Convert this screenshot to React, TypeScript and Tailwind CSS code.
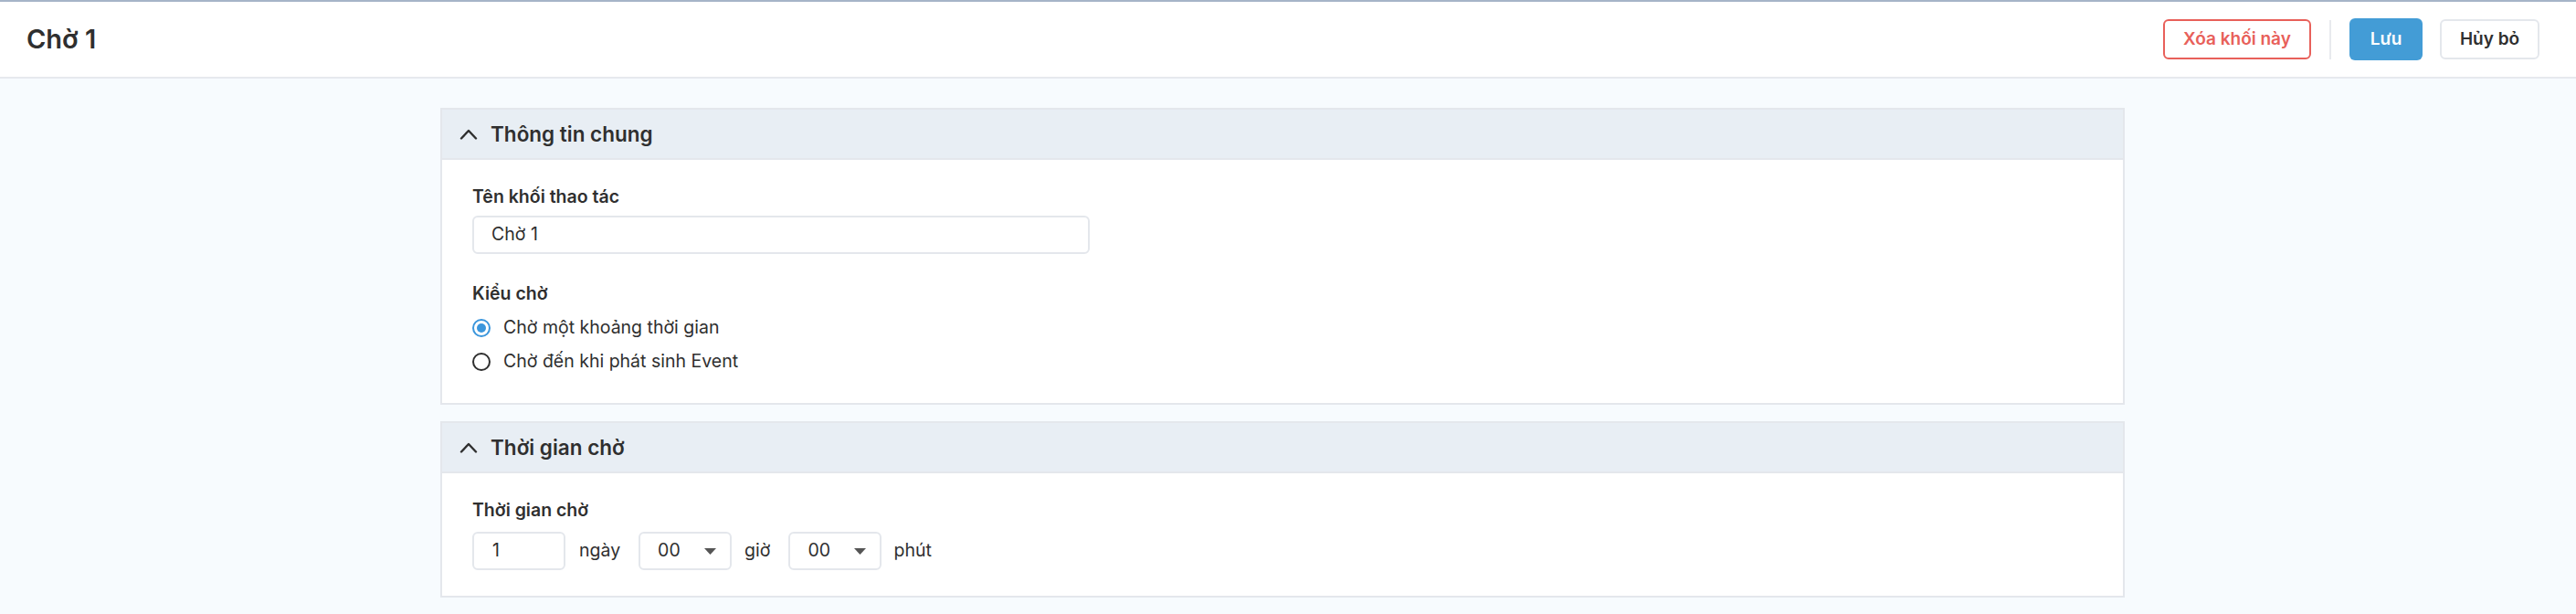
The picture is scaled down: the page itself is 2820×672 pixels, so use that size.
import React from 'react'

const FONT = "font-['Inter','Noto_Sans',sans-serif]"

const Chevron = () => (
  <svg width="20" height="13" viewBox="0 0 20 13" fill="none">
    <path d="M2 11.5 L10 3 L18 11.5" stroke="#2f2f2f" strokeWidth="2.4" strokeLinecap="round" strokeLinejoin="round" />
  </svg>
)

const Caret = () => (
  <svg width="13" height="7" viewBox="0 0 13 7">
    <polygon points="0,0 13,0 6.5,7" fill="#555555" />
  </svg>
)

function Panel({ title, children }: { title: string; children: React.ReactNode }) {
  return (
    <section className="border-2 border-[#e4e7ec] bg-white">
      <div className="h-[55px] bg-[#e8eef4] border-b-2 border-[#e4e7ec] flex items-center pl-[19px] gap-[14px]">
        <Chevron />
        <span className="text-[22.5px] font-semibold text-[#2f2f2f]">{title}</span>
      </div>
      {children}
    </section>
  )
}

function Radio({ checked, label }: { checked?: boolean; label: string }) {
  return (
    <label className="flex items-center gap-[14px] h-[28px]">
      {checked ? (
        <span className="w-[20px] h-[20px] rounded-full border-[2.5px] border-[#3b96dc] flex items-center justify-center">
          <span className="w-[10px] h-[10px] rounded-full bg-[#3b96dc]" />
        </span>
      ) : (
        <span className="w-[20px] h-[20px] rounded-full border-[2.5px] border-[#2f2f2f]" />
      )}
      <span className="text-[19.5px] text-[#2f2f2f]">{label}</span>
    </label>
  )
}

function Select({ value }: { value: string }) {
  return (
    <div className="w-[102px] h-[42px] border-2 border-[#e4e7ec] rounded-[6px] flex items-center justify-between pl-[19px] pr-[15px]">
      <span className="text-[19.5px]">{value}</span>
      <Caret />
    </div>
  )
}

export default function App() {
  return (
    <div className={`min-h-screen bg-[#f7fbfe] text-[#2f2f2f] ${FONT}`}>

      {/* Header */}
      <header className="h-[86px] bg-white border-t-2 border-t-[#a6b4c8] border-b-2 border-b-[#e6e9ee] flex items-center justify-between pl-[29px] pr-[40px]">
        <h1 className="text-[29px] font-semibold text-[#2f2f2f]">Chờ 1</h1>
        <div className="flex items-center">
          <button className="h-[44px] w-[162px] border-2 border-[#e8605a] rounded-[6px] text-[19px] font-semibold text-[#e8605a]">
            Xóa khối này
          </button>
          <div className="w-[2px] h-[43px] bg-[#e8eaee] mx-[20px]" />
          <button className="h-[46px] w-[80px] bg-[#439cd6] rounded-[6px] text-[19px] font-semibold text-white">
            Lưu
          </button>
          <button className="ml-[19px] h-[44px] w-[109px] border-2 border-[#e4e7ec] rounded-[6px] text-[19px] font-semibold text-[#2f2f2f]">
            Hủy bỏ
          </button>
        </div>
      </header>

      {/* Content */}
      <main className="ml-[482px] w-[1844px] pt-[32px] flex flex-col gap-[18px]">

        <Panel title="Thông tin chung">
          <div className="pt-[26px] pb-[31px] px-[33px]">
            <div className="text-[19.5px] font-semibold leading-[28px]">Tên khối thao tác</div>
            <div className="mt-[7px] w-[676px] h-[42px] border-2 border-[#e4e7ec] rounded-[6px] flex items-center pl-[19px] text-[19.5px]">
              Chờ 1
            </div>
            <div className="mt-[29px] text-[19.5px] font-semibold leading-[28px]">Kiểu chờ</div>
            <div className="mt-[10px] flex flex-col gap-[9px]">
              <Radio checked label="Chờ một khoảng thời gian" />
              <Radio label="Chờ đến khi phát sinh Event" />
            </div>
          </div>
        </Panel>

        <Panel title="Thời gian chờ">
          <div className="pt-[26px] pb-[28px] px-[33px]">
            <div className="text-[19.5px] font-semibold leading-[28px]">Thời gian chờ</div>
            <div className="mt-[10px] flex items-center">
              <div className="w-[102px] h-[42px] border-2 border-[#e4e7ec] rounded-[6px] flex items-center pl-[20px] text-[19.5px]">1</div>
              <span className="ml-[15px] mr-[20px] text-[19.5px]">ngày</span>
              <Select value="00" />
              <span className="ml-[14px] mr-[20px] text-[19.5px]">giờ</span>
              <Select value="00" />
              <span className="ml-[13px] text-[19.5px]">phút</span>
            </div>
          </div>
        </Panel>

      </main>
    </div>
  )
}
